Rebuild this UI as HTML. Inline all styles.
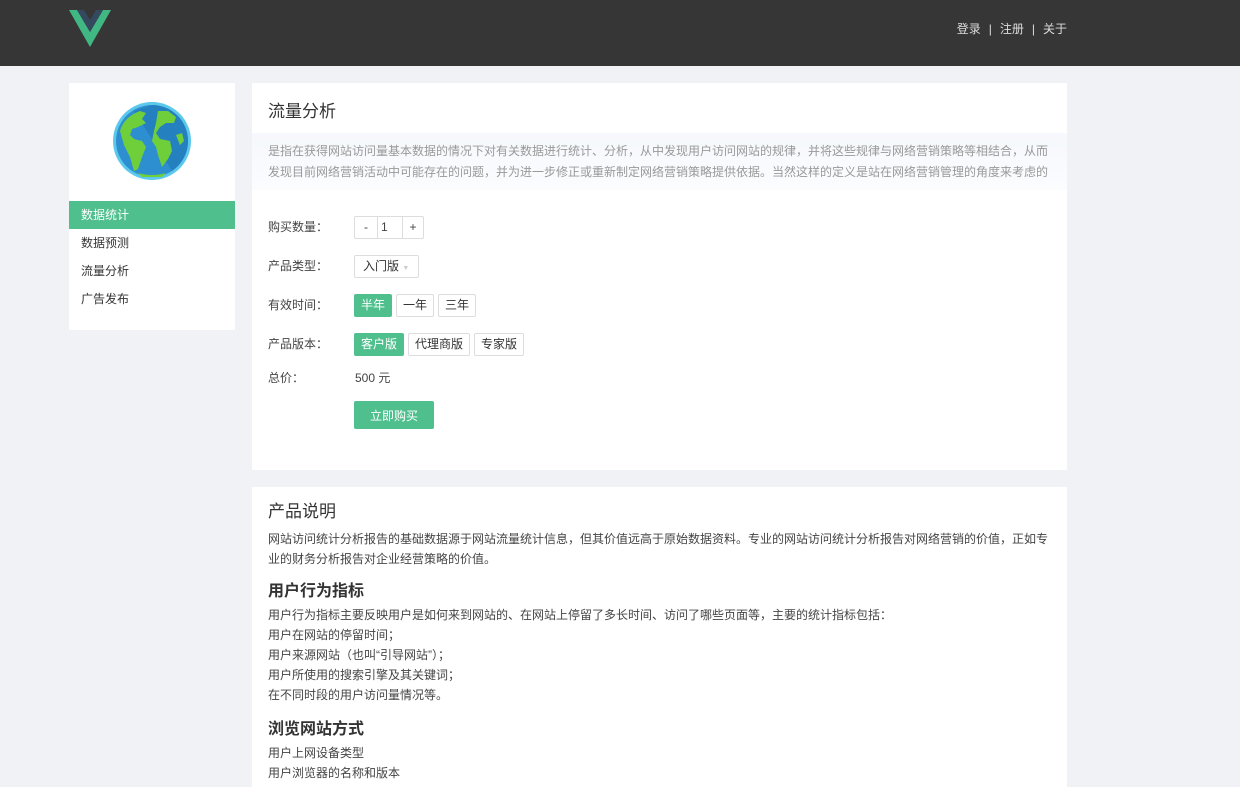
<!DOCTYPE html>
<html><head><meta charset="utf-8"><style>
*{margin:0;padding:0;box-sizing:border-box}
body{width:1240px;height:775px;overflow:hidden;background:#f0f2f5;font-family:"Liberation Sans","Noto Sans CJK SC",sans-serif;font-size:12px;color:#444}
.hd{height:66px;background:#363636;position:relative}
.nav{position:absolute;right:173px;top:20px;color:#ddd;font-size:12px}
.nav span{margin:0 8px}
.side{position:absolute;left:69px;top:83px;width:166px;height:247px;background:#fff}
.side .it{height:28px;line-height:28px;padding-left:12px;font-size:12px;color:#333}
.side .on{background:#4fc08d;color:#fff}
.p1{position:absolute;left:252px;top:83px;width:815px;height:387px;background:#fff}
.p2{position:absolute;left:252px;top:487px;width:815px;height:300px;background:#fff;padding:10px 16px}
h2{font-weight:normal;font-size:17px;position:absolute;left:16px;top:14px;color:#333}
.desc{position:absolute;left:0;top:50px;width:815px;height:57px;background:linear-gradient(#f5f8fc,#fbfcfe);padding:8px 16px;color:#999;line-height:21px;font-size:12px}
.row{position:absolute;left:16px;font-size:12px;color:#444}
.lb{position:absolute;left:0;width:86px;white-space:nowrap}
.b{display:inline-block;border:1px solid #ddd;border-radius:2px;height:23px;line-height:21px;padding:0 6px;margin-right:4px;color:#333;background:#fff;white-space:nowrap}
.g{background:#4fc08d;border-color:#4fc08d;color:#fff}
.p2 h3{font-size:16px;margin:8px 0 4px;color:#333}
.p2 p{line-height:20px;font-size:12px;color:#444}
.c{font-family:"Noto Sans CJK SC",sans-serif}
</style></head><body>
<div class="hd">
<svg style="position:absolute;left:69px;top:10px" width="42" height="37" viewBox="0 0 42 37"><path d="M0 0h8l13 22L34 0h8L21 37z" fill="#41b883"/><path d="M8 0h7l6 10 6-10h7L21 22z" fill="#35495e"/></svg>
<div class="nav">登录<span>|</span>注册<span>|</span>关于</div>
</div>
<div class="side">
<svg style="position:absolute;left:43px;top:18px" width="80" height="80" viewBox="0 0 80 80"><circle cx="40" cy="40" r="39" fill="#5bc8ec"/><circle cx="40" cy="40" r="36" fill="#2e8fd0"/><path d="M40 4A36 36 0 0 1 76 40 36 36 0 0 1 60 70L22 10z" fill="#2580c0"/><path d="M8 30q4-14 20-20l6 2-4 6 4 4-8 4-6 2-2 6 4 4 8 2 4 6-4 10-4 12-4 2-4-14-6-12z" fill="#6fcf3a"/><path d="M46 10l10 0 8 6-2 6-8 0-6 4-4 6 4 6 10 2 2 10-4 8-6 8-4-12-2-8-4-6 2-10 2-8z" fill="#6fcf3a"/><path d="M64 34l6-2 2 8-4 4z" fill="#6fcf3a"/><path d="M26 72q14 4 28 0l-4 4H30z" fill="#6fcf3a"/></svg>
<div style="position:absolute;top:118px;width:166px">
<div class="it on">数据统计</div><div class="it">数据预测</div><div class="it">流量分析</div><div class="it">广告发布</div></div>
</div>
<div class="p1">
<h2>流量分析</h2>
<div class="desc">是指在获得网站访问量基本数据的情况下对有关数据进行统计、分析，从中发现用户访问网站的规律，并将这些规律与网络营销策略等相结合，从而发现目前网络营销活动中可能存在的问题，并为进一步修正或重新制定网络营销策略提供依据。当然这样的定义是站在网络营销管理的角度来考虑的</div>
<div class="row" style="top:133px"><span class="lb" style="top:2px">购买数量<span class="c">：</span></span><span style="position:absolute;left:86px;display:flex;border:1px solid #ddd;height:23px;line-height:21px;border-radius:2px;top:0"><span style="width:23px;text-align:center;border-right:1px solid #ddd">-</span><span style="width:24px;padding-left:3px">1</span><span style="width:21px;text-align:center;border-left:1px solid #ddd">+</span></span></div>
<div class="row" style="top:172px"><span class="lb" style="top:2px">产品类型<span class="c">：</span></span><span class="b" style="position:absolute;left:86px;width:65px;padding:0 8px">入门版 <span style="color:#ccc;font-size:7px">▼</span></span></div>
<div class="row" style="top:211px"><span class="lb" style="top:2px">有效时间<span class="c">：</span></span><span style="position:absolute;left:86px;white-space:nowrap"><span class="b g">半年</span><span class="b">一年</span><span class="b">三年</span></span></div>
<div class="row" style="top:250px"><span class="lb" style="top:2px">产品版本<span class="c">：</span></span><span style="position:absolute;left:86px;white-space:nowrap"><span class="b g">客户版</span><span class="b">代理商版</span><span class="b">专家版</span></span></div>
<div class="row" style="top:286px"><span class="lb">总价<span class="c">：</span></span><span style="position:absolute;left:87px;white-space:nowrap">500 元</span></div>
<div class="row" style="top:318px;left:102px"><span class="b g" style="width:80px;height:28px;line-height:28px;text-align:center;font-size:12px">立即购买</span></div>
</div>
<div class="p2">
<div style="font-size:17px;margin-bottom:7px;color:#333">产品说明</div>
<p>网站访问统计分析报告的基础数据源于网站流量统计信息，但其价值远高于原始数据资料。专业的网站访问统计分析报告对网络营销的价值，正如专业的财务分析报告对企业经营策略的价值。</p>
<h3>用户行为指标</h3>
<p>用户行为指标主要反映用户是如何来到网站的、在网站上停留了多长时间、访问了哪些页面等，主要的统计指标包括：<br>用户在网站的停留时间；<br>用户来源网站（也叫“引导网站”）；<br>用户所使用的搜索引擎及其关键词；<br>在不同时段的用户访问量情况等。</p>
<h3 style="margin-top:10px">浏览网站方式</h3>
<p>用户上网设备类型<br>用户浏览器的名称和版本</p>
</div>
</body></html>
